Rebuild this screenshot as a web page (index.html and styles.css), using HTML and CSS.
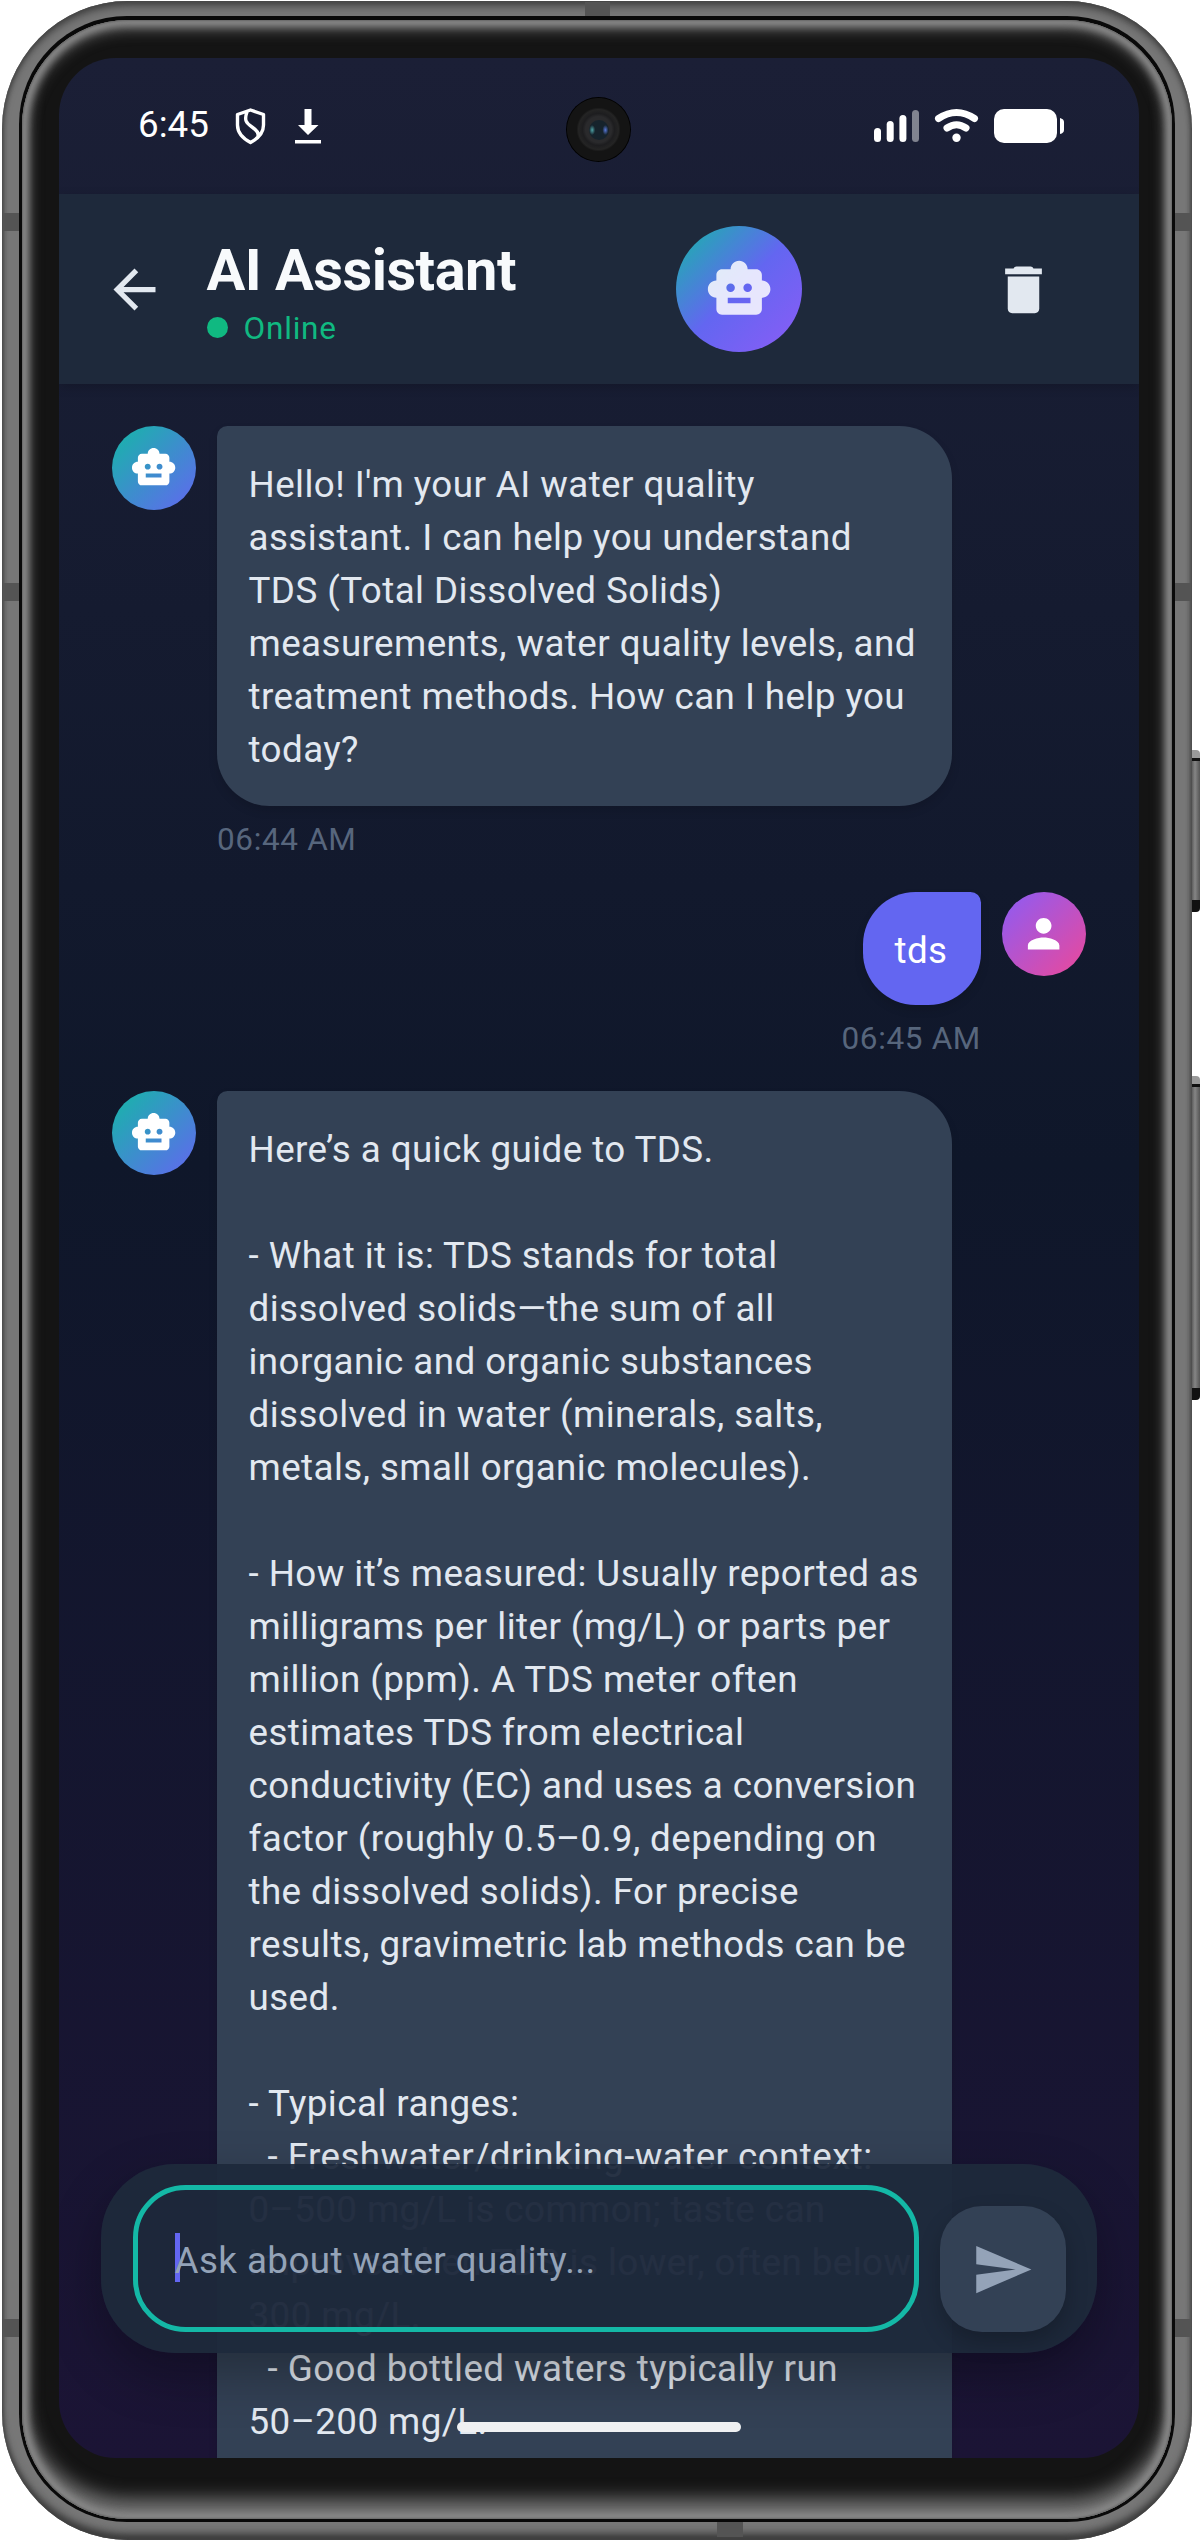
FILE: index.html
```html
<!DOCTYPE html>
<html lang="en">
<head>
<meta charset="utf-8">
<title>AI Assistant</title>
<link rel="stylesheet" href="styles.css">
</head>
<body>
<svg class="defs" width="0" height="0" aria-hidden="true">
  <symbol id="bot" viewBox="0 0 24 24"><path d="M20 9V7c0-1.1-.9-2-2-2h-3c0-1.66-1.34-3-3-3S9 3.34 9 5H6c-1.1 0-2 .9-2 2v2c-1.66 0-3 1.34-3 3s1.34 3 3 3v4c0 1.1.9 2 2 2h12c1.1 0 2-.9 2-2v-4c1.66 0 3-1.34 3-3s-1.34-3-3-3zM7.5 11.5c0-.83.67-1.5 1.5-1.5s1.5.67 1.5 1.5S9.83 13 9 13s-1.5-.67-1.5-1.5zM16 17H8v-2h8v2zm-1-4c-.83 0-1.5-.67-1.5-1.5S14.17 10 15 10s1.5.67 1.5 1.5S15.83 13 15 13z"/></symbol>
</svg>
<div class="stage">
  <div class="side-button power"></div>
  <div class="side-button volume"></div>
  <div class="phone">
    <i class="band top"></i><i class="band bottom"></i>
    <i class="band l1"></i><i class="band l2"></i><i class="band l3"></i>
    <i class="band r1"></i><i class="band r2"></i><i class="band r3"></i>
    <div class="seam">
      <div class="bezel">
        <div class="screen">
          <div class="statusbar">
            <span class="clock">6:45</span>
            <svg class="shield" width="31" height="37" viewBox="0 0 31 37"><path d="M15.500 2L28.500 6.500V17C28.500 25 23 30.500 15.500 34.500C8 30.500 2.500 25 2.500 17V6.500Z M12 4C9 12 11 15 17 19C23 23 24.500 26 22.500 29.500"/></svg>
            <svg class="download" width="26" height="35" viewBox="0 0 26 35"><path d="M9.500 0h7v16h7L13 26 3 16h6.500zM0 31h26v3.500H0z"/></svg>
            <svg class="signals" width="192" height="36" viewBox="0 0 192 36">
              <rect x="0" y="20" width="7" height="14" rx="3.500"/><rect x="12.700" y="13" width="7" height="21" rx="3.500"/><rect x="25.400" y="7" width="7" height="27" rx="3.500"/><rect x="38" y="2" width="7" height="32" rx="3.500" opacity=".45"/>
              <path class="wave" d="M64.500 10.500Q82.500-1.500 100.500 10.500M73 20Q82.500 13.500 92 20"/><circle cx="82.500" cy="29.800" r="4.200"/>
              <rect x="120" y="1" width="63" height="34" rx="10"/><path d="M186 10q4 1 4 4v8q0 3-4 4z"/>
            </svg>
            <div class="camera"><i></i></div>
          </div>
          <div class="appbar">
            <svg class="back" width="63" height="63" viewBox="0 0 24 24"><path d="M20 11H7.830l5.590-5.590L12 4l-8 8 8 8 1.410-1.410L7.830 13H20v-2z"/></svg>
            <div class="heading">
              <div class="title">AI Assistant</div>
              <div class="status"><i></i><span>Online</span></div>
            </div>
            <div class="logo"><svg width="68.250" height="68.250"><use href="#bot"/></svg></div>
            <svg class="trash" width="63" height="63" viewBox="0 0 24 24"><path d="M6 19.300c0 .95.750 1.700 1.700 1.700h8.600c.95 0 1.700-.75 1.700-1.700V7H6v12.300zM19 4h-3.200q-.3-.8-1.100-.8H9.300q-.8 0-1.100.8H5v2.200h14V4z"/></svg>
          </div>
          <div class="chat">
            <div class="row">
              <div class="avatar"><svg width="47.250" height="47.250"><use href="#bot"/></svg></div>
              <div class="message">
                <div class="bubble">Hello! I'm your AI water quality
assistant. I can help you understand
TDS (Total Dissolved Solids)
measurements, water quality levels, and
treatment methods. How can I help you
today?</div>
                <div class="time">06:44 AM</div>
              </div>
            </div>
            <div class="row mine">
              <div class="message">
                <div class="bubble">tds</div>
                <div class="time">06:45 AM</div>
              </div>
              <div class="avatar"><svg width="47.250" height="47.250" viewBox="0 0 24 24"><path d="M12 12c2.210 0 4-1.790 4-4s-1.790-4-4-4-4 1.790-4 4 1.790 4 4 4zm0 2c-2.670 0-8 1.340-8 4v2h16v-2c0-2.660-5.330-4-8-4z"/></svg></div>
            </div>
            <div class="row">
              <div class="avatar"><svg width="47.250" height="47.250"><use href="#bot"/></svg></div>
              <div class="message">
                <div class="bubble long">Here’s a quick guide to TDS.

- What it is: TDS stands for total
dissolved solids—the sum of all
inorganic and organic substances
dissolved in water (minerals, salts,
metals, small organic molecules).

- How it’s measured: Usually reported as
milligrams per liter (mg/L) or parts per
million (ppm). A TDS meter often
estimates TDS from electrical
conductivity (EC) and uses a conversion
factor (roughly 0.5–0.9, depending on
the dissolved solids). For precise
results, gravimetric lab methods can be
used.

- Typical ranges:
  - Freshwater/drinking-water context:
0–500 mg/L is common; taste can
improve when TDS is lower, often below
300 mg/L.
  - Good bottled waters typically run
50–200 mg/L.</div>
              </div>
            </div>
          </div>
          <div class="composer">
            <div class="field"><span>Ask about water quality...</span></div>
            <div class="send"><svg width="63" height="63" viewBox="0 0 24 24"><path d="M2 21L23 12 2 3v7l15 2-15 2z"/></svg></div>
          </div>
          <div class="home"></div>
        </div>
      </div>
    </div>
  </div>
</div>
</body>
</html>
```
FILE: styles.css
```css
* { box-sizing: border-box; }
body { margin: 0; background: #fff; font-family: Roboto, "Liberation Sans", sans-serif; }
.defs { position: absolute; }
.stage { position: relative; width: 1200px; height: 2541px; overflow: hidden; }
svg { display: block; flex: none; fill: currentColor; }

/* Device frame */
.phone {
  position: relative; width: 1190px; height: 2539px; margin-left: 2px; padding: 15px 17px 18px 17px;
  border-radius: 126px / 128px; background: #777; top: 1px;
  box-shadow: inset 0 0 4px 1px #444, inset 0 -9px 9px -3px #333, inset 0 8px 8px -3px #444;
}
.seam { height: 100%; padding: 4px 3px 3px; border-radius: 108px; background: #090909; }
.bezel {
  height: 100%; padding: 38px 36px 60px 37px; border-radius: 106px; background: #141414;
  box-shadow: inset 0 0 2px 1px #666, inset 0 0 7px 6px #8a8a8a, inset 0 6px 14px 4px #606060, inset 0 -18px 18px 2px #747474;
}
.band { position: absolute; background: #545454; }
.band.top { left: 583px; top: 1px; width: 25px; height: 14px; }
.band.bottom { left: 715px; bottom: 3px; width: 26px; height: 15px; }
.band.l1, .band.l2, .band.l3 { left: 1px; width: 16px; height: 18px; }
.band.r1, .band.r2, .band.r3 { right: 1px; width: 16px; height: 18px; }
.l1, .r1 { top: 212px; }
.l2, .r2 { top: 582px; }
.l3, .r3 { top: 2318px; }
.side-button {
  position: absolute; left: 1190px; width: 10px; border-radius: 0 4px 4px 0;
  background: linear-gradient(#999 0 8px, #111 8px 11px, transparent 11px calc(100% - 12px), #111 0), linear-gradient(90deg, #444, #858585 50%, #555);
}
.power { top: 750px; height: 162px; }
.volume { top: 1076px; height: 324px; }

/* Screen */
.screen {
  position: relative; width: 1080px; height: 2400px; border-radius: 57px; overflow: hidden;
  display: flex; flex-direction: column;
  background: linear-gradient(#1b1f36, #0f172a 46%, #1b1435);
}
.statusbar { position: relative; flex: none; height: 136px; padding: 0 75px 0 79px; display: flex; color: #fff; }
.clock { font-size: 36.75px; line-height: 43px; margin-top: 45px; width: 97px; letter-spacing: 0; }
.shield { margin-top: 50px; fill: none; stroke: #fff; stroke-width: 3.4; stroke-linejoin: round; }
.download { margin: 51px 0 0 29px; }
.signals { margin: 50px 0 0 auto; margin-right: -2px; }
.wave { fill: none; stroke: #fff; stroke-width: 7; stroke-linecap: round; }
.camera {
  position: absolute; left: 507px; top: 39px; width: 65px; height: 65px; border-radius: 50%;
  background: radial-gradient(circle, #2a2a2c 0 13px, #1d1d1f 16px, #242424 20px, #141414 22px 31px, #000 32px);
}
.camera i {
  position: absolute; left: 23px; top: 23px; width: 20px; height: 20px; border-radius: 50%;
  background: radial-gradient(ellipse 3px 5px at 16% 50%, #4fa3a6, transparent), radial-gradient(ellipse 3px 5px at 82% 50%, #5878d8, transparent), #16232c;
}

/* App bar */
.appbar {
  position: relative; z-index: 1; flex: none; height: 190px; padding: 0 84px 0 43.5px; display: flex; align-items: center;
  background: #1e293b; color: #e2e8f0; box-shadow: 0 3px 10px rgba(0, 0, 0, .18);
}
.heading { width: 469px; margin-left: 41px; padding-top: 4px; }
.title { font-size: 57.75px; line-height: 68px; font-weight: 700; letter-spacing: -.5px; color: #f8fafc; white-space: nowrap; }
.status { display: flex; align-items: center; height: 37px; margin-top: 6px; color: #10b981; font-size: 31.5px; line-height: 37px; letter-spacing: .8px; }
.status i { width: 21px; height: 21px; border-radius: 50%; background: currentColor; margin-right: 16px; position: relative; top: -1px; }
.logo {
  width: 126px; height: 126px; margin-left: .5px; border-radius: 50%; display: flex; align-items: center; justify-content: center;
  background: linear-gradient(135deg, #14b8a6, #6366f1 50%, #8b5cf6); color: rgba(255, 255, 255, .84);
}
.trash { margin-left: auto; }

/* Conversation */
.chat { flex: 1; min-height: 0; overflow: hidden; padding: 42px 53px 0 53px; }
.row { display: flex; align-items: flex-start; gap: 21px; }
.row.mine { justify-content: flex-end; }
.avatar {
  flex: none; width: 84px; height: 84px; border-radius: 50%; display: flex; align-items: center; justify-content: center;
  background: linear-gradient(135deg, #14b8a6, #6366f1); color: #fff;
}
.mine .avatar { background: linear-gradient(135deg, #8b5cf6, #ec4899); }
.message { display: flex; flex-direction: column; align-items: flex-start; }
.mine .message { align-items: flex-end; }
.bubble {
  width: 735px; padding: 31.5px 31.5px 30.5px; border-radius: 10.5px 52.5px 52.5px; background: #334155; color: #e2e8f0;
  font-size: 36.75px; line-height: 53px; letter-spacing: .43px; white-space: pre; box-shadow: 0 5px 10px rgba(0, 0, 0, .12);
}
.bubble.long { height: 1500px; }
.mine .bubble { width: 118px; height: 113px; border-radius: 52.5px 10.5px 52.5px 52.5px; background: #6366f1; color: #fff; }
.time { margin: 12px 0 30px; font-size: 31.5px; line-height: 44px; color: #64748b; opacity: .85; letter-spacing: .65px; white-space: nowrap; }

/* Message composer, floating over the conversation */
.composer {
  position: absolute; left: 42px; top: 2106px; width: 996px; height: 189px; padding: 21px 31.5px; border-radius: 73.5px;
  display: flex; gap: 21px; align-items: flex-end;
  background: rgba(30, 41, 59, .95); box-shadow: 0 21px 52px rgba(0, 0, 0, .3);
}
.field {
  position: relative; width: 786px; height: 147px; border: 5.5px solid #14b8a6; border-radius: 52.5px; padding-left: 37px;
  display: flex; align-items: center; font-size: 36.75px; line-height: 43px; letter-spacing: .43px; color: #94a3b8; background: rgba(30, 41, 59, .3);
}
.field::before { content: ""; position: absolute; left: 37px; top: 43px; width: 5px; height: 49px; background: #6366f1; }
.field span { position: relative; top: 2px; }
.send {
  width: 126px; height: 126px; border-radius: 42px; display: flex; align-items: center; justify-content: center;
  background: #334155; color: #94a3b8; box-shadow: 0 10px 21px rgba(0, 0, 0, .22);
}
.home { position: absolute; left: 398px; top: 2364px; width: 284px; height: 10px; border-radius: 5px; background: #eff0f2; }
```
